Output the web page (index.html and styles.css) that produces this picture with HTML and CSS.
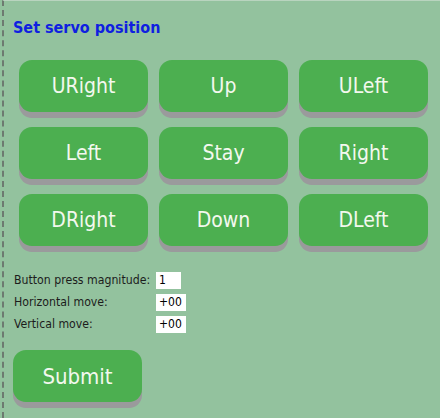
FILE: index.html
```html
<!DOCTYPE html>
<html>
<head>
<meta charset="utf-8">
<link rel="stylesheet" href="styles.css">
</head>
<body>
<div class="frame">
  <h3 class="title">Set servo position</h3>
  <div class="pad">
    <button class="btn">URight</button>
    <button class="btn">Up</button>
    <button class="btn">ULeft</button>
    <button class="btn">Left</button>
    <button class="btn">Stay</button>
    <button class="btn">Right</button>
    <button class="btn">DRight</button>
    <button class="btn">Down</button>
    <button class="btn">DLeft</button>
  </div>
  <table class="form">
    <tr><td class="lbl">Button press magnitude:</td><td><span class="inp narrow">1</span></td></tr>
    <tr><td class="lbl">Horizontal move:</td><td><span class="inp">+00</span></td></tr>
    <tr><td class="lbl">Vertical move:</td><td><span class="inp">+00</span></td></tr>
  </table>
  <button class="btn submit">Submit</button>
</div>
</body>
</html>
```

FILE: styles.css
```css
html, body {
  margin: 0;
  padding: 0;
  background: #93c29e;
  height: 100%;
}
.frame {
  height: 418px;
  box-sizing: border-box;
  border-top: 1px solid #b9d4bf;
  border-left: 2px dashed #6d7a70;
  margin-left: 2px;
  padding: 17px 0 0 9px;
  font-family: "DejaVu Sans Condensed", "DejaVu Sans", sans-serif;
}
.title {
  margin: 0;
  font-size: 16px;
  font-weight: bold;
  color: #0f1fe0;
  line-height: 20px;
}
.pad {
  display: grid;
  grid-template-columns: repeat(3, 129px);
  column-gap: 11px;
  row-gap: 15px;
  margin: 22px 0 0 6px;
}
.btn {
  height: 52px;
  border: none;
  border-radius: 13px;
  background: #4caf50;
  color: #f3f8ee;
  font-family: "DejaVu Sans Condensed", "DejaVu Sans", sans-serif;
  font-size: 21px;
  box-shadow: 0 6px 0 #9a9a9c;
  padding: 0;
}
.form {
  margin: 23px 0 0 1px;
  border-collapse: collapse;
  font-size: 12.2px;
  color: #1c1c1c;
}
.form td {
  padding: 0;
  height: 22px;
}
.lbl {
  width: 142px;
  padding-right: 2px;
}
.inp {
  display: inline-block;
  background: #fff;
  height: 17px;
  line-height: 17px;
  width: 30px;
  padding-left: 3px;
  box-sizing: border-box;
  font-family: "DejaVu Sans Condensed", "DejaVu Sans", sans-serif;
  font-size: 12px;
  color: #000;
}
.inp.narrow {
  width: 25px;
}
.submit {
  display: block;
  margin-top: 15px;
  width: 129px;
  font-size: 22px;
}
```
